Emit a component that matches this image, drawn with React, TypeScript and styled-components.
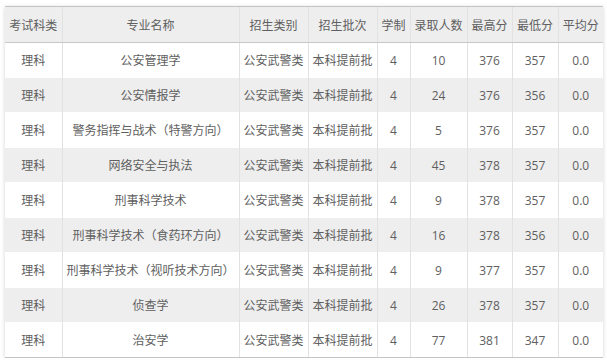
import styled, { createGlobalStyle } from 'styled-components';

const GlobalStyle = createGlobalStyle`
  html, body {
    margin: 0;
    padding: 0;
    background: #fff;
  }
  body {
    font-family: "Open Sans", "Noto Sans CJK SC", sans-serif;
  }
`;

const Wrap = styled.div`
  padding: 6px 4px 0 5px;
`;

const Table = styled.table`
  width: 598px;
  border-collapse: collapse;
  table-layout: fixed;
  box-shadow: 0 1px 4px rgba(0, 0, 0, 0.18);
  font-size: 12px;
  color: #606060;
`;

const Col = styled.col<{ w: number }>`
  width: ${(p) => p.w}px;
`;

const HeadCell = styled.th`
  height: 35px;
  padding: 0;
  font-weight: normal;
  background: #eee;
  border-top: 1px solid #c4c4c4;
  border-bottom: 1px solid #c8c8c8;
  border-left: 1px solid #e2e2e2;
  text-align: center;
  white-space: nowrap;
  &:first-child {
    border-left: none;
  }
`;

const Row = styled.tr<{ $alt: boolean }>`
  background: ${(p) => (p.$alt ? '#eeeeee' : '#fff')};
  &:last-child td {
    border-bottom: 1px solid #c4c4c4;
  }
`;

const Cell = styled.td`
  height: 34px;
  padding: 0;
  text-align: center;
  white-space: nowrap;
  border-left: 1px solid #e2e2e2;
  border-top: 1px solid #fff;
  &:first-child {
    border-left: none;
  }
`;

const columns: [string, number][] = [
  ['考试科类', 57],
  ['专业名称', 177],
  ['招生类别', 69],
  ['招生批次', 69],
  ['学制', 33],
  ['录取人数', 57],
  ['最高分', 45],
  ['最低分', 46],
  ['平均分', 45],
];

const rows = [
  ['公安管理学', '10', '376', '357'],
  ['公安情报学', '24', '376', '356'],
  ['警务指挥与战术（特警方向）', '5', '376', '357'],
  ['网络安全与执法', '45', '378', '357'],
  ['刑事科学技术', '9', '378', '357'],
  ['刑事科学技术（食药环方向）', '16', '378', '356'],
  ['刑事科学技术（视听技术方向）', '9', '377', '357'],
  ['侦查学', '26', '378', '357'],
  ['治安学', '77', '381', '347'],
];

export default function App() {
  return (
    <Wrap>
      <GlobalStyle />
      <Table>
        <colgroup>
          {columns.map(([label, w]) => (
            <Col key={label} w={w} />
          ))}
        </colgroup>
        <thead>
          <tr>
            {columns.map(([label]) => (
              <HeadCell key={label}>{label}</HeadCell>
            ))}
          </tr>
        </thead>
        <tbody>
          {rows.map(([name, count, max, min], i) => (
            <Row key={name} $alt={i % 2 === 1}>
              <Cell>理科</Cell>
              <Cell>{name}</Cell>
              <Cell>公安武警类</Cell>
              <Cell>本科提前批</Cell>
              <Cell>4</Cell>
              <Cell>{count}</Cell>
              <Cell>{max}</Cell>
              <Cell>{min}</Cell>
              <Cell>0.0</Cell>
            </Row>
          ))}
        </tbody>
      </Table>
    </Wrap>
  );
}
